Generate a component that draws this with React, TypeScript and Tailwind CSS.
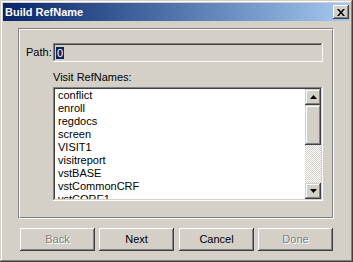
import React from 'react';

const raised = 'shadow-[inset_-1px_-1px_#404040,inset_1px_1px_#fff,inset_-2px_-2px_#808080,inset_2px_2px_#d4d0c8]';
const raisedSb = 'shadow-[inset_-1px_-1px_#404040,inset_1px_1px_#d4d0c8,inset_-2px_-2px_#808080,inset_2px_2px_#fff]';
const sunken = 'shadow-[inset_-1px_-1px_#fff,inset_1px_1px_#808080,inset_-2px_-2px_#d4d0c8,inset_2px_2px_#404040]';

const refNames = ['conflict', 'enroll', 'regdocs', 'screen', 'VISIT1', 'visitreport', 'vstBASE', 'vstCommonCRF', 'vstCORE1'];

const Arrow = ({ down }: { down?: boolean }) => (
  <svg width="7" height="4" viewBox="0 0 7 4" className={down ? 'rotate-180' : ''}>
    <path d="M3.5 0 L7 4 L0 4 Z" fill="#000" />
  </svg>
);

const WinButton = ({ label, disabled, className = '' }: { label: string; disabled?: boolean; className?: string }) => (
  <div
    className={`w-[75px] h-[23px] flex items-center justify-center bg-[#d4d0c8] ${raised} ${
      disabled ? 'text-[#808080] [text-shadow:1px_1px_0_#fff]' : 'text-black'
    } ${className}`}
  >
    {label}
  </div>
);

export default function App() {
  return (
    <div className="w-[353px] h-[262px] bg-[#d4d0c8] p-[3px] text-[11px] leading-[13px] font-['Liberation_Sans',Arial,sans-serif] shadow-[inset_-1px_-1px_#404040,inset_1px_1px_#d4d0c8,inset_-2px_-2px_#808080,inset_2px_2px_#fff] flex flex-col">
      {/* title bar */}
      <div className="h-[18px] flex items-center justify-between pl-[2px] pr-[1px] bg-linear-to-r from-[#0a246a] to-[#a6caf0]">
        <span className="text-white font-bold">Build RefName</span>
        <div className={`w-[16px] h-[14px] bg-[#d4d0c8] flex items-center justify-center ${raised}`}>
          <svg width="8" height="7" viewBox="0 0 8 7">
            <path d="M0 0 H2 L4 2.5 L6 0 H8 L5 3.5 L8 7 H6 L4 4.5 L2 7 H0 L3 3.5 Z" fill="#000" />
          </svg>
        </div>
      </div>

      {/* group box */}
      <div className="mt-[7px] ml-[15px] w-[316px] h-[191px] border border-t-[#808080] border-l-[#808080] border-r-white border-b-white">
        <div className="h-full border border-t-white border-l-white border-r-[#808080] border-b-[#808080] pt-[13px] pl-[6px]">
          <div className="flex items-center">
            <span className="w-[27px]">Path:</span>
            <div className={`w-[270px] h-[19px] bg-[#d4d0c8] flex items-center pl-[3px] ${sunken}`}>
              <span className="bg-[#0a246a] text-white px-px leading-[12px]">0</span>
            </div>
          </div>
          <div className="ml-[27px] mt-[9px]">Visit RefNames:</div>
          <div className={`ml-[27px] mt-[3px] w-[270px] h-[114px] bg-white p-[2px] flex ${sunken}`}>
            <div className="flex-1 overflow-hidden pl-[3px]">
              {refNames.map((n) => (
                <div key={n} className="h-[13px] whitespace-nowrap">{n}</div>
              ))}
            </div>
            <div className="w-[16px] flex flex-col">
              <div className={`h-[16px] bg-[#d4d0c8] flex items-center justify-center ${raisedSb}`}>
                <Arrow />
              </div>
              <div className={`h-[40px] bg-[#d4d0c8] ${raisedSb}`} />
              <div className="flex-1 bg-[repeating-conic-gradient(#fff_0_25%,#d4d0c8_0_50%)] bg-[length:2px_2px]" />
              <div className={`h-[16px] bg-[#d4d0c8] flex items-center justify-center ${raisedSb}`}>
                <Arrow down />
              </div>
            </div>
          </div>
        </div>
      </div>

      {/* buttons */}
      <div className="mt-[9px] ml-[17px] flex">
        <WinButton label="Back" disabled />
        <WinButton label="Next" className="ml-[4px]" />
        <WinButton label="Cancel" className="ml-[5px]" />
        <WinButton label="Done" disabled className="ml-[4px]" />
      </div>
    </div>
  );
}
